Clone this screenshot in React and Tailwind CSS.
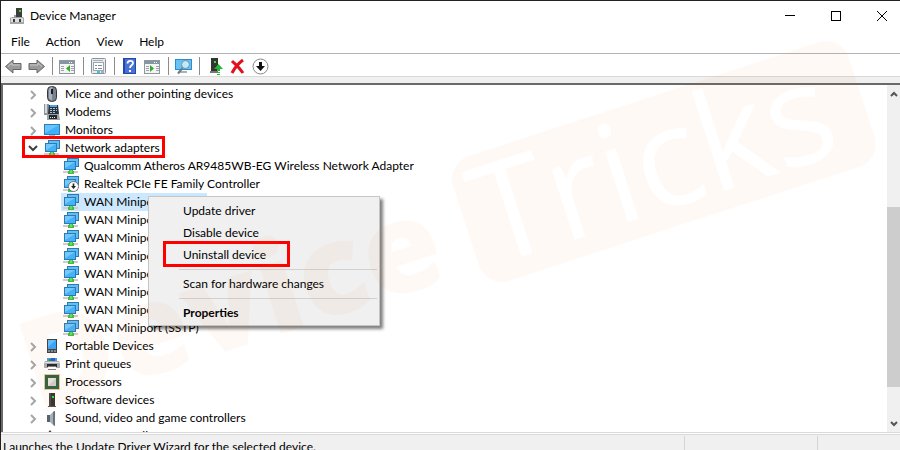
import React from "react";

function NetworkIcon({ disabled }) {
  return (
    <svg viewBox="0 0 16 16" className="h-4 w-4 shrink-0">
      <path d="M0 13h6v2H0zM10 13h5v2h-5z" fill="#cdcdcd" />
      <path d="M6 11h4v2h1v3H5v-3h1z" fill="#45b94a" />
      <path d="M7 12h2v3H7z" fill="#5fe060" />
      <rect x="4.500" y="0.500" width="11" height="8" fill="#5fc0f8" stroke="#2f79ad" />
      <rect x="1.500" y="3.500" width="11" height="8" fill="#43b2fa" stroke="#2f79ad" />
      <path d="M2 4h10L2 10z" fill="#74c9fc" />
      {disabled && (
        <g>
          <circle cx="10.500" cy="10.500" r="5" fill="#fff" stroke="#777" />
          <path d="M9.700 7.500h1.600V10H13l-2.500 3L8 10h1.700z" fill="#222" />
        </g>
      )}
    </svg>
  );
}

function MouseIcon() {
  return (
    <svg viewBox="0 0 16 16" className="h-4 w-4">
      <rect x="3.500" y="0.500" width="9" height="15" rx="4" fill="#7b828a" stroke="#33383d" />
      <path d="M5 3c1-1.500 2-2 3-2v13c-2 0-3-1-3-3z" fill="#aab2ba" />
      <path d="M8 3v5" stroke="#111c3c" strokeWidth="2" />
    </svg>
  );
}

function ModemIcon() {
  return (
    <svg viewBox="0 0 16 16" className="h-4 w-4">
      <path d="M0 0h5v11H0z" fill="#8d959c" />
      <path d="M1 0h2v9H1z" fill="#d6dadd" />
      <path d="M5 1h9l1 9H4z" fill="#2c3338" />
      <path d="M6 1h7v2H6z" fill="#4aa8f0" />
      <path d="M6 4h2v1H6zM9 4h2v1H9zM12 4h1v1h-1zM6 6h2v1H6zM9 6h2v1H9zM12 6h1v1h-1zM6 8h2v1H6zM9 8h2v1H9z" fill="#9fc6e4" />
      <path d="M3 10h12l1 6H3z" fill="#9ba1a6" />
      <path d="M5 11h8v4H5z" fill="#23282c" />
      <path d="M6 13h1v1H6zM8 13h1v1H8zM10 13h1v1h-1z" fill="#e8e8e8" />
    </svg>
  );
}

function MonitorIcon() {
  return (
    <svg viewBox="0 0 16 16" className="h-4 w-4">
      <rect x="0.500" y="2.500" width="15" height="10" fill="#3fb1fb" stroke="#2c7db8" />
      <path d="M1 3h14L1 11z" fill="#67c4fd" />
      <path d="M5 13h6v1H5z" fill="#b5bcc2" />
    </svg>
  );
}

function PortableIcon() {
  return (
    <svg viewBox="0 0 16 16" className="h-4 w-4">
      <path d="M3 1h10v14H3z" fill="#3c4246" />
      <path d="M4 2h8v9H4z" fill="#36a5fa" />
      <path d="M4 2h8l-8 7z" fill="#62befd" />
      <path d="M4 12h8v2H4z" fill="#82898e" />
      <path d="M6 12h1v2H6zM9 12h1v2H9z" fill="#43494d" />
    </svg>
  );
}

function PrinterIcon() {
  return (
    <svg viewBox="0 0 16 16" className="h-4 w-4">
      <path d="M3 2h10v4H3z" fill="#39a1ef" />
      <path d="M5 3h4v3H5z" fill="#2f8c3b" />
      <path d="M7 2h4v3H7z" fill="#1f5fd0" />
      <path d="M1 5h14l1 3v4H0V8z" fill="#a9afb4" />
      <path d="M1 6h14v1H1z" fill="#e3e6e8" />
      <path d="M3 8h10v3H3z" fill="#22272a" />
      <path d="M4 10h8v4H4z" fill="#fff" />
      <path d="M4 10h8v1H4zM4 13h8v1H4z" fill="#7b8287" />
    </svg>
  );
}

function ProcessorIcon() {
  return (
    <svg viewBox="0 0 16 16" className="h-4 w-4">
      <rect x="0.500" y="0.500" width="15" height="15" fill="none" stroke="#c29a35" strokeDasharray="1 1" />
      <path d="M1 1h14v14H1z" fill="#2f6248" />
      <path d="M4 4h8v8H4z" fill="#cfcfca" />
      <path d="M4 4h8l-8 8z" fill="#e5e5e1" />
    </svg>
  );
}

function TowerIcon() {
  return (
    <svg viewBox="0 0 16 16" className="h-4 w-4">
      <path d="M5 1h6v13H5z" fill="#343434" />
      <path d="M5 1h2v13H5z" fill="#4b4b4b" />
      <path d="M8 4h2v2H8z" fill="#35e335" />
      <path d="M4 14h8v1H4z" fill="#555" />
    </svg>
  );
}

function SpeakerIcon() {
  return (
    <svg viewBox="0 0 16 16" className="h-4 w-4">
      <path d="M3 5h3v7H3z" fill="#59636c" />
      <path d="M6 5l4-4h1v15h-1l-4-4z" fill="#a5afb8" />
      <path d="M9 2l2-1v15l-2-2z" fill="#68737d" />
    </svg>
  );
}

function StorageIcon() {
  return (
    <svg viewBox="0 0 16 16" className="h-4 w-4">
      <path d="M3 6l3-4 3 4v6H3z" fill="#474747" />
    </svg>
  );
}

function Chevron({ open }) {
  return (
    <svg viewBox="0 0 12 12" className="h-3 w-3" fill="none" strokeWidth="2">
      {open ? <path d="M2 4l4 4 4-4" stroke="#404040" /> : <path d="M4 2l4 4-4 4" stroke="#a6a6a6" />}
    </svg>
  );
}

const before = [
  ["Mice and other pointing devices", MouseIcon],
  ["Modems", ModemIcon],
  ["Monitors", MonitorIcon],
];

const adapters = [
  "Qualcomm Atheros AR9485WB-EG Wireless Network Adapter",
  "Realtek PCIe FE Family Controller",
  "WAN Miniport (IKEv2)",
  "WAN Miniport (IP)",
  "WAN Miniport (IPv6)",
  "WAN Miniport (L2TP)",
  "WAN Miniport (Network Monitor)",
  "WAN Miniport (PPPOE)",
  "WAN Miniport (PPTP)",
  "WAN Miniport (SSTP)",
];

const after = [
  ["Portable Devices", PortableIcon],
  ["Print queues", PrinterIcon],
  ["Processors", ProcessorIcon],
  ["Software devices", TowerIcon],
  ["Sound, video and game controllers", SpeakerIcon],
  ["Storage controllers", StorageIcon],
];

function Category({ label, Icon, open, marked }) {
  return (
    <div className="relative flex h-[18px] items-center pl-6">
      <button aria-label={"Toggle " + label} className={"mr-[5px] " + (open ? "" : "mt-0.5")}>
        <Chevron open={open} />
      </button>
      <Icon />
      <span className="ml-[5px]">{label}</span>
      {marked && <div className="absolute -top-[3px] left-[19px] h-[22px] w-[143px] border-3 border-[#ff0000]" />}
    </div>
  );
}

function Tree() {
  return (
    <ul className="min-w-0 flex-1 overflow-hidden leading-[18px] whitespace-nowrap">
      {before.map(([label, Icon]) => (
        <li key={label}>
          <Category label={label} Icon={Icon} />
        </li>
      ))}
      <li>
        <Category label="Network adapters" Icon={NetworkIcon} open marked />
        <ul>
          {adapters.map((name, i) => (
            <li key={name} className="flex h-[18px] pl-[58px]">
              <div className={"flex items-center gap-[5px] pr-1 pl-0.5 " + (i === 2 ? "bg-[#cce8ff]" : "")}>
                <NetworkIcon disabled={i === 1} />
                <span>{name}</span>
              </div>
            </li>
          ))}
        </ul>
      </li>
      {after.map(([label, Icon]) => (
        <li key={label}>
          <Category label={label} Icon={Icon} />
        </li>
      ))}
    </ul>
  );
}

function ToolButton({ label, children }) {
  return (
    <button aria-label={label} className="flex h-full w-[23px] items-center justify-center">
      <svg viewBox="0 0 17 17" className="h-[17px] w-[17px]">
        {children}
      </svg>
    </button>
  );
}

function ToolDivider() {
  return (
    <div className="flex h-[18px] w-2 justify-center">
      <div className="w-px bg-[#8c8c8c]" />
    </div>
  );
}

function PanelGlyph({ arrow }) {
  return (
    <g>
      <rect x="0.500" y="2.500" width="15" height="13" fill="#f4f4f4" stroke="#8e979f" />
      <path d="M1 3h14v3H1z" fill="#8595a4" />
      <path d="M10 4h1v1h-1zM12 4h1v1h-1z" fill="#fff" />
      <path d="M2 8h3v1H2zM2 10h3v1H2zM2 12h3v1H2zM12 8h3v1h-3zM12 10h3v1h-3zM12 12h3v1h-3z" fill="#9aa4ad" />
      <path d={arrow} fill="#37a82c" />
    </g>
  );
}

function Toolbar() {
  return (
    <div className="flex h-[22px] shrink-0 items-center pt-0.5 pl-px">
      <ToolButton label="Back">
        <path d="M0.500 8.500L8 2v3.500h8v6H8V15z" fill="#9a9a9a" stroke="#676767" />
        <path d="M3 8.500L7 5v2h8" stroke="#c9c9c9" fill="none" />
      </ToolButton>
      <ToolButton label="Forward">
        <path d="M16.500 8.500L9 2v3.500H1v6h8V15z" fill="#9a9a9a" stroke="#676767" />
        <path d="M2 7h8V5l4 3.500" stroke="#c9c9c9" fill="none" />
      </ToolButton>
      <ToolDivider />
      <ToolButton label="Show or hide console tree">
        <PanelGlyph arrow="M11 7v7l-4-3.500z" />
      </ToolButton>
      <ToolDivider />
      <ToolButton label="Properties">
        <rect x="1.500" y="0.500" width="14" height="15" rx="1" fill="#e9ecee" stroke="#89929a" />
        <path d="M3 2h10v1H3z" fill="#a8b0b7" />
        <rect x="3.500" y="4.500" width="10" height="8" fill="#fff" stroke="#9da6ae" />
        <path d="M5 7h2v1H5zM8 7h4v1H8zM5 10h2v1H5zM8 10h4v1H8z" fill="#7d8993" />
        <path d="M7 13h3v2H7z" fill="#35c5f2" />
        <path d="M11 13h3v2h-3z" fill="#aab2b9" />
      </ToolButton>
      <ToolDivider />
      <ToolButton label="Help">
        <path d="M2 0h13v16H2z" fill="#2448a8" />
        <path d="M4 1h10v14H4z" fill="#4a72d6" />
        <path d="M6.500 5.500c0-3.500 5.500-3.500 5.500-.5 0 2.500-3 2-3 5" fill="none" stroke="#fff" strokeWidth="1.800" />
        <path d="M8 12h2v2H8z" fill="#fff" />
      </ToolButton>
      <ToolButton label="Show or hide action pane">
        <PanelGlyph arrow="M6 7v7l4-3.500z" />
      </ToolButton>
      <ToolDivider />
      <ToolButton label="Scan for hardware changes">
        <path d="M0 1h17v11H0z" fill="#2d8ccb" />
        <path d="M1 2h15v9H1z" fill="#65c3f5" />
        <path d="M5 13h7v2H5z" fill="#a8b4bd" />
        <circle cx="10.500" cy="6.500" r="4" fill="#c2e8fb" stroke="#758d9f" />
        <path d="M7.500 10L3 15.500" stroke="#697d8b" strokeWidth="2" />
      </ToolButton>
      <ToolDivider />
      <ToolButton label="Update driver">
        <path d="M5 0h7v13H5z" fill="#343434" />
        <path d="M8 3h2v2H8z" fill="#35e335" />
        <path d="M4 13h8v2H4z" fill="#777" />
        <path d="M12.500 6l4.500 5h-3v2h-3v-2H8z" fill="#24b936" />
        <path d="M11 14h3v1h-3zM11 16h3v1h-3z" fill="#24b936" />
      </ToolButton>
      <ToolButton label="Uninstall device">
        <path d="M3 3c3 3 7 6 11 12M14 2C10 5 6 9 3 15" stroke="#e01020" strokeWidth="3" fill="none" />
      </ToolButton>
      <ToolButton label="Disable device">
        <circle cx="8.500" cy="8.500" r="7.500" fill="#fff" stroke="#888" />
        <path d="M7 4h3v4h3l-4.500 5L4 8h3z" fill="#111" />
      </ToolButton>
    </div>
  );
}

function TitleBar() {
  return (
    <header className="flex h-[30px] shrink-0 items-center pl-2">
      <svg viewBox="0 0 16 16" className="mr-[5px] h-4 w-4">
        <path d="M7 0h6v10H7z" fill="#3d3d3d" />
        <path d="M10 2h2v2h-2z" fill="#35d835" />
        <path d="M3 9h2V7h2v2h7v1H3z" fill="#9a9a9a" />
        <path d="M1 9.500h14V16H1z" fill="#a8a8a8" />
        <path d="M2 10h12v4H2z" fill="#dedede" />
        <path d="M4 11h2v3H4zM10 11h2v3h-2z" fill="#3c3c3c" />
      </svg>
      <h1 className="flex-1">Device Manager</h1>
      <div className="flex h-full gap-2.5 text-black">
        <button aria-label="Minimize" className="flex w-9 items-center justify-center">
          <svg viewBox="0 0 10 10" className="h-2.5 w-2.5"><path d="M0 4.500h10" stroke="currentColor" /></svg>
        </button>
        <button aria-label="Maximize" className="flex w-9 items-center justify-center">
          <svg viewBox="0 0 10 10" className="h-2.5 w-2.5"><rect x="0.500" y="0.500" width="9" height="9" fill="none" stroke="currentColor" /></svg>
        </button>
        <button aria-label="Close" className="flex w-9 items-center justify-center">
          <svg viewBox="0 0 10 10" className="h-2.5 w-2.5"><path d="M0 0l10 10M10 0L0 10" stroke="currentColor" /></svg>
        </button>
      </div>
    </header>
  );
}

function MenuItem({ children, bold, marked }) {
  return (
    <button role="menuitem" className={"relative flex h-[22px] w-full items-center pl-8 " + (bold ? "font-bold" : "")}>
      {children}
      {marked && <span className="absolute -top-[3px] left-3 h-[26px] w-[127px] border-3 border-[#ff0000]" />}
    </button>
  );
}

function ContextMenu() {
  return (
    <div role="menu" className="absolute top-[195px] left-[147px] w-[232px] border border-[#c6c6c6] bg-[#f0f0f0] px-0.5 pt-[3px] pb-px shadow-[3px_3px_3px_rgba(0,0,0,0.5)]">
      <MenuItem>Update driver</MenuItem>
      <MenuItem>Disable device</MenuItem>
      <MenuItem marked>Uninstall device</MenuItem>
      <hr className="my-[3px] ml-7 border-[#d0d0d0]" />
      <MenuItem>Scan for hardware changes</MenuItem>
      <hr className="my-[3px] ml-7 border-[#d0d0d0]" />
      <MenuItem bold>Properties</MenuItem>
    </div>
  );
}

function Watermark() {
  return (
    <svg viewBox="0 0 900 450" aria-hidden="true" className="pointer-events-none absolute top-0 left-0 h-[450px] w-[900px] font-['Open_Sans',sans-serif]">
      <g transform="rotate(-18 663 161)">
        <rect x="455" y="95" width="416" height="131" rx="24" fill="#ff6a28" fillOpacity="0.045" />
        <text x="466" y="207" fontSize="138" fill="#fff">Tricks</text>
        <text x="-10" y="206" fontSize="126" fontWeight="800" fill="#ff6a28" fillOpacity="0.045">Device</text>
      </g>
    </svg>
  );
}

export default function App() {
  return (
    <div className="relative flex h-screen flex-col overflow-hidden border-t border-l border-[#222] bg-white font-['Lato','Open_Sans',sans-serif] text-xs text-black">
      <TitleBar />
      <nav className="flex h-[22px] shrink-0 items-center gap-4 pl-2.5">
        <button>File</button>
        <button>Action</button>
        <button>View</button>
        <button>Help</button>
      </nav>
      <div className="h-px shrink-0 bg-[#b0b4b9]" />
      <Toolbar />
      <div className="h-[7px] shrink-0 border-t border-[#d9d9d9] bg-[#f0f0f0]" />
      <main className="flex min-h-0 flex-1 border-t-2 border-l-2 border-[#696969]">
        <Tree />
        <div className="flex w-[13px] shrink-0 flex-col bg-[#f0f0f0]">
          <button aria-label="Scroll up" className="flex h-[17px] items-center justify-center">
            <svg viewBox="0 0 8 6" className="h-1.5 w-2"><path d="M1 5l3-3 3 3" fill="none" stroke="#555" strokeWidth="2" /></svg>
          </button>
          <div className="flex-[105]" />
          <div className="flex-[180] bg-[#cdcdcd]" />
          <div className="flex-[28]" />
          <button aria-label="Scroll down" className="flex h-[17px] items-center justify-center">
            <svg viewBox="0 0 8 6" className="h-1.5 w-2"><path d="M1 1l3 3 3-3" fill="none" stroke="#555" strokeWidth="2" /></svg>
          </button>
        </div>
      </main>
      <div className="h-[3px] shrink-0 border-y border-[#d9d9d9] bg-white" />
      <footer className="flex h-[15px] shrink-0 overflow-hidden bg-[#f0f0f0] pt-px leading-[22px] whitespace-nowrap">
        <span className="flex-1 pl-0.5">Launches the Update Driver Wizard for the selected device.</span>
        <span className="w-[133px] border-l border-[#d5d5d5]" />
        <span className="w-[83px] border-l border-[#d5d5d5]" />
      </footer>
      <ContextMenu />
      <Watermark />
    </div>
  );
}
